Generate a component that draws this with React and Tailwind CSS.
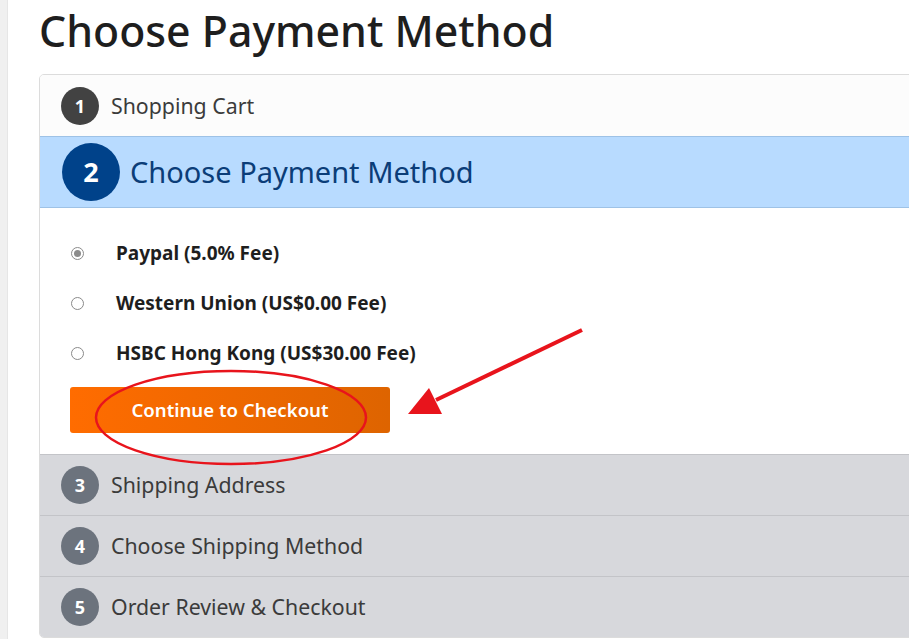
import React from "react";

const font = { fontFamily: '"Noto Sans", "Open Sans", sans-serif' };

function StepRow({ n, label }) {
  return (
    <div className="flex h-[61px] items-center border-t border-[#c3c4c8] bg-[#d7d8dc] pl-[21px]">
      <div className="flex h-[38px] w-[38px] items-center justify-center rounded-full bg-[#6c737d] text-[18px] font-bold text-white">
        {n}
      </div>
      <div className="ml-[12px] text-[21.3px] text-[#3b3b3b]">{label}</div>
    </div>
  );
}

function Radio({ checked, label }) {
  return (
    <div className="flex h-[50px] items-center">
      <div className="ml-[31px] flex h-[13px] w-[13px] items-center justify-center rounded-full border border-[#8a8a8a] bg-white">
        {checked && <div className="h-[7px] w-[7px] rounded-full bg-[#8c8c8c]" />}
      </div>
      <div className="ml-[32px] text-[19px] font-bold text-[#1e1e1e]">{label}</div>
    </div>
  );
}

export default function App() {
  return (
    <div className="relative flex h-[639px] w-[909px] overflow-hidden bg-white" style={font}>
      <div className="w-[8px] shrink-0 border-r border-[#e6e6e6] bg-[#f0f0f0]" />
      <div className="pl-[31px]">
        <h1 className="mt-[3px] h-[71px] text-[42.8px] font-medium leading-[56px] text-[#1e1e1e]">Choose Payment Method</h1>
        <div className="w-[900px] overflow-hidden rounded-[5px] border border-[#dcdcdc]">
          <div className="flex h-[61px] items-center bg-[#fcfcfc] pl-[21px] pt-[1px]">
            <div className="flex h-[38px] w-[38px] items-center justify-center rounded-full bg-[#424242] text-[18px] font-bold text-white">
              1
            </div>
            <div className="ml-[12px] text-[21.3px] text-[#3b3b3b]">Shopping Cart</div>
          </div>
          <div className="flex h-[72px] items-center border-y border-[#9ec2e6] bg-[#b8dbff] pl-[22px]">
            <div className="flex h-[58px] w-[58px] items-center justify-center rounded-full bg-[#00428a] text-[27px] font-bold text-white">
              2
            </div>
            <div className="ml-[10px] text-[29px] text-[#0b3d78]">Choose Payment Method</div>
          </div>
          <div className="bg-white pb-[21px] pt-[20px]">
            <Radio checked label="Paypal (5.0% Fee)" />
            <Radio label="Western Union (US$0.00 Fee)" />
            <Radio label="HSBC Hong Kong (US$30.00 Fee)" />
            <div className="ml-[30px] mt-[9px] flex h-[46px] w-[320px] items-center justify-center rounded-[3px] bg-gradient-to-r from-[#ff6c00] to-[#de6400] text-[18.6px] font-semibold text-white">
              Continue to Checkout
            </div>
          </div>
          <StepRow n="3" label="Shipping Address" />
          <StepRow n="4" label="Choose Shipping Method" />
          <StepRow n="5" label="Order Review & Checkout" />
        </div>
      </div>
      <svg className="pointer-events-none absolute left-0 top-0" width="909" height="639" viewBox="0 0 909 639">
        <ellipse cx="231" cy="417.5" rx="135" ry="46.5" fill="none" stroke="#e8141c" strokeWidth="2.5" />
        <line x1="582" y1="330" x2="436" y2="400" stroke="#e8141c" strokeWidth="4" />
        <polygon points="408,414 429,388 442,414" fill="#e8141c" />
      </svg>
    </div>
  );
}
